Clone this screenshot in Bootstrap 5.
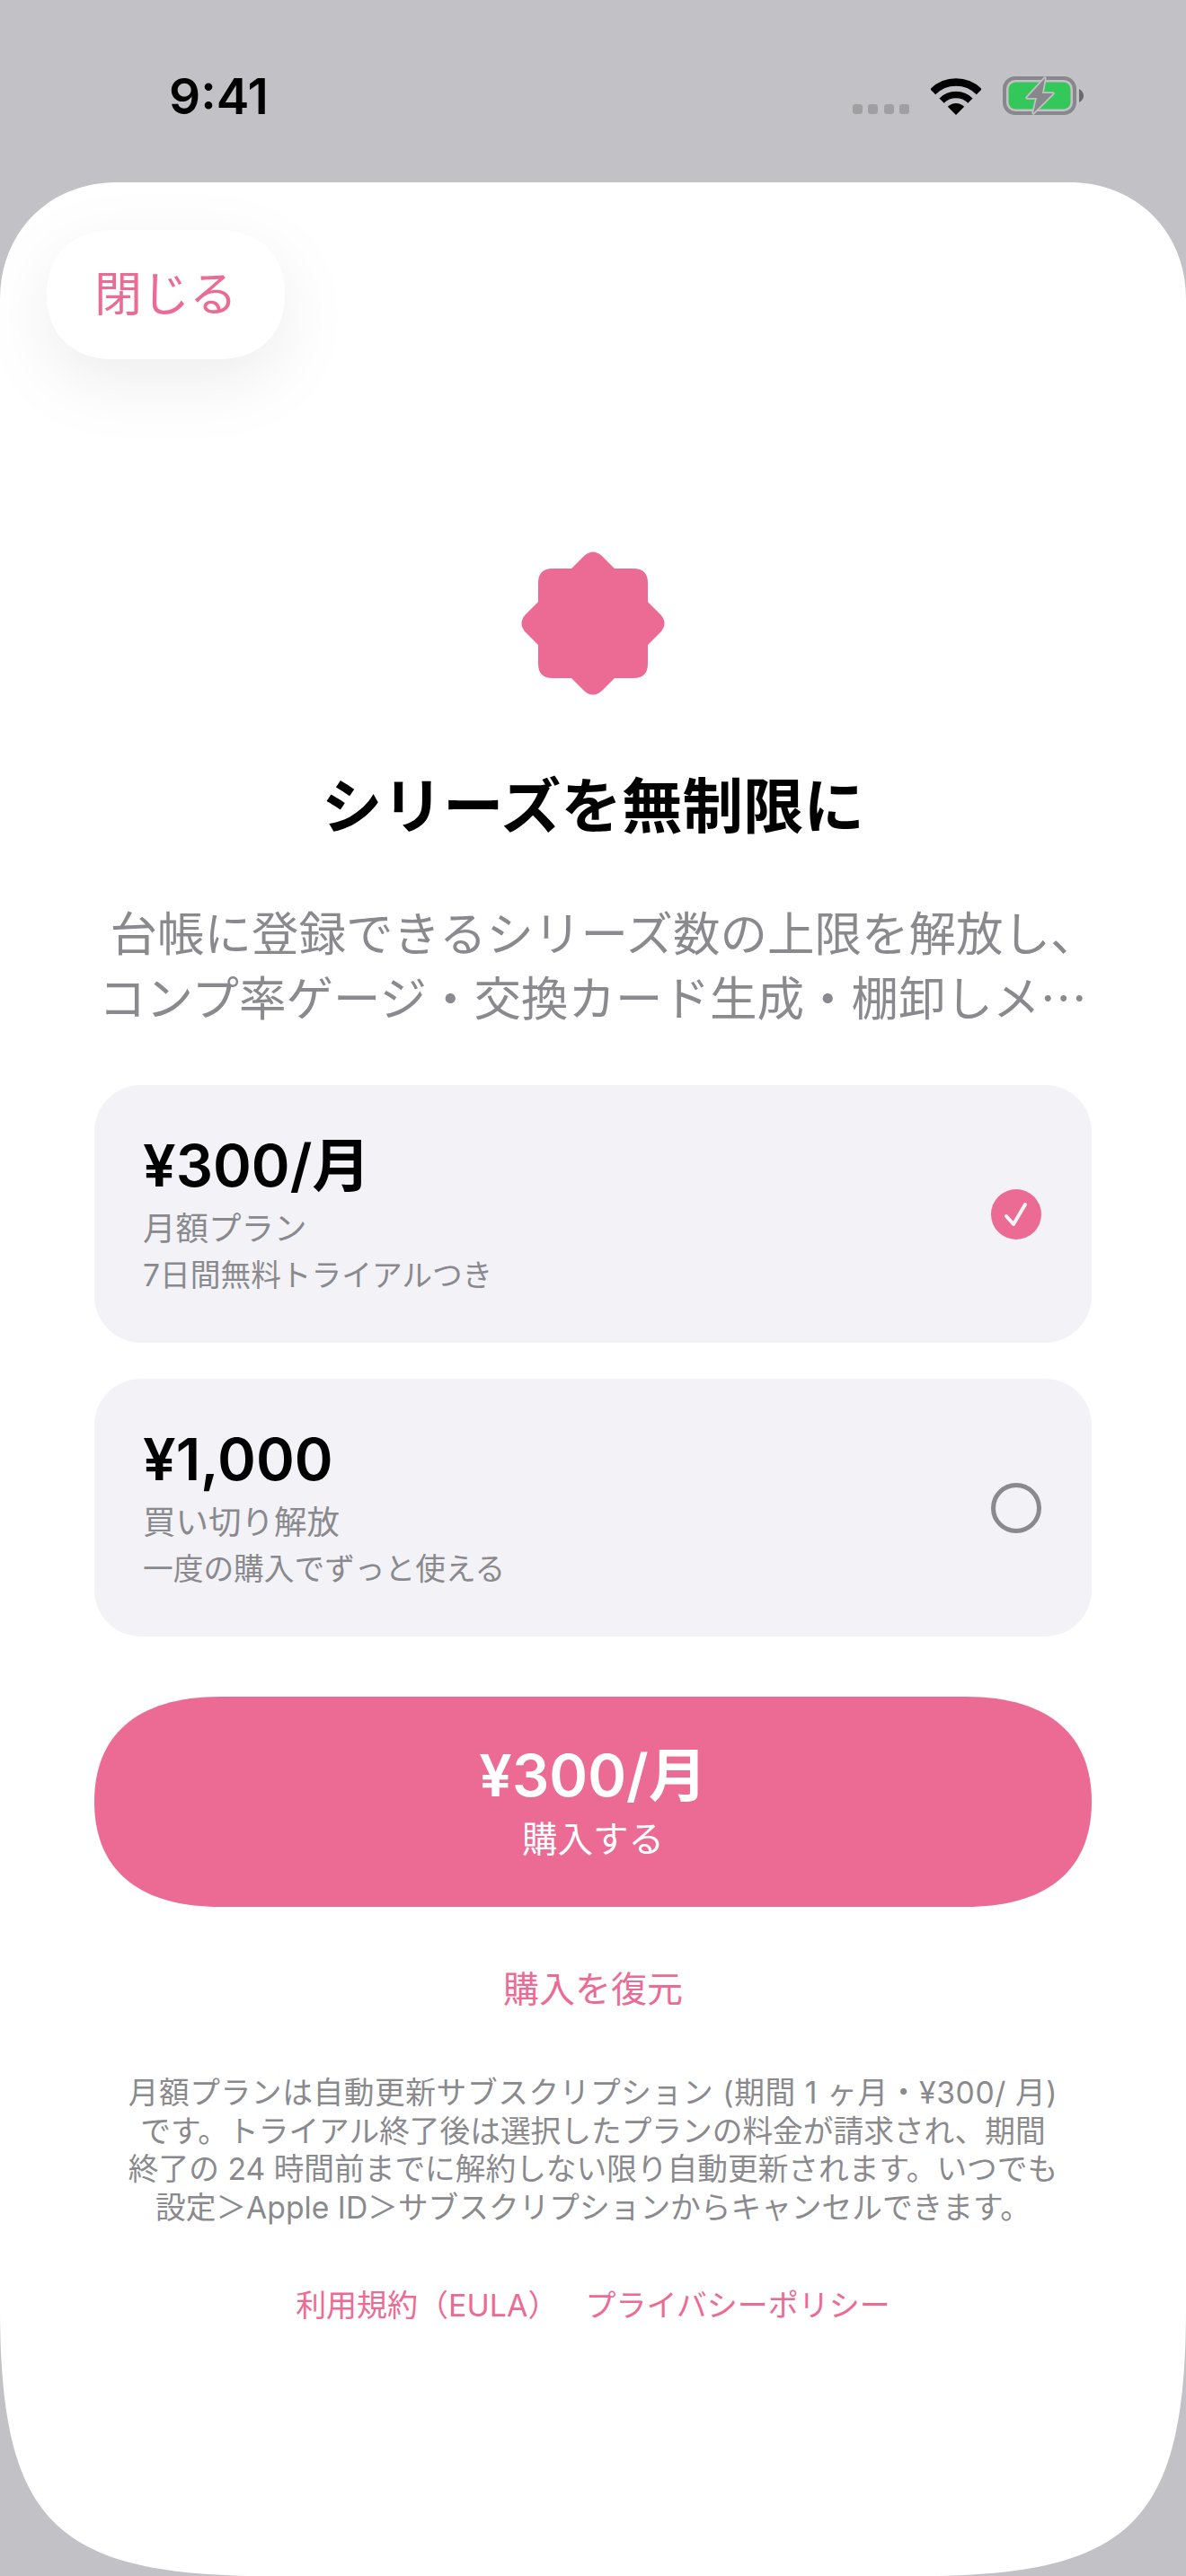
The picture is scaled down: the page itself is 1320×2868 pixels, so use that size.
<!DOCTYPE html>
<html lang="ja">
<head>
  <meta charset="UTF-8">
  <meta name="viewport" content="width=device-width, initial-scale=1.0">
  <title>シリーズを無制限に</title>
  <link href="https://cdn.jsdelivr.net/npm/bootstrap@5.3.0/dist/css/bootstrap.min.css" rel="stylesheet">
  <style>
    body { background: #c2c1c6; height: 2868px; overflow: hidden; font-family: Inter, "Noto Sans CJK JP", sans-serif; }
    .status-area { height: 203px; padding: 79px 114px 0 188px; }
    .clock { font-size: 55px; font-weight: 600; line-height: 56px; color: #000; }
    .signal-dots { gap: 6.500px; margin-right: 24px; margin-bottom: 1px; }
    .signal-dots span { width: 11px; height: 11px; border-radius: 3px; background: #a0a0a3; }
    .status-icons { padding-top: 6px; }
    /* sheet corners are continuous curves, not circles */
    .sheet { height: 2665px; background: #fff; padding: 53px 105px 0; overflow: hidden; clip-path: path("M0 130C0 55 55 0 130 0H1190C1265 0 1320 55 1320 130V2365C1320 2605 1260 2665 1020 2665H300C60 2665 0 2605 0 2365Z"); }
    .close-wrap { width: 265px; margin-left: -53px; filter: drop-shadow(0 24px 36px rgba(0,0,0,.07)); }
    .close-pill { width: 265px; height: 144px; background: #fff; color: #ec6b94; font-size: 53px; font-weight: 400; border: 0; padding: 2px 0 0; clip-path: path("M0 72C0 28 28 0 75 0H190C237 0 265 28 265 72C265 116 237 144 190 144H75C28 144 0 116 0 72Z"); }
    .badge-icon { margin-top: 214px; }
    .sheet-title { margin: 80px 0 0; font-size: 67.500px; line-height: 88px; font-weight: 700; color: #000; }
    .sheet-sub { margin: 59px -40px 0; font-size: 52.500px; line-height: 71.500px; color: #8a8a8e; white-space: nowrap; font-family: "Noto Sans CJK JP", sans-serif; }
    .sub-first { display: block; padding-left: 24px; }
    .plans { margin-top: 64px; gap: 40px; }
    .plan-box { height: 287px; background: #f2f2f7; border-radius: 52px; padding: 0 56px 0 54px; }
    .plan-price { font-size: 65px; line-height: 80px; font-weight: 600; color: #000; }
    .plan-name { font-size: 36.500px; line-height: 52px; color: #8a8a8e; margin-top: 4px; }
    .plan-note { font-size: 33.700px; line-height: 50px; color: #8a8a8e; margin-top: 1px; }
    .radio-off { width: 56px; height: 56px; border-radius: 50%; border: 5px solid #8a8a8e; }
    .radio-on { width: 56px; height: 56px; border-radius: 50%; background: #ec6b94; }
    .buy-btn { height: 234px; margin-top: 67px; width: 100%; background: #ec6b94; color: #fff; border: 0; border-radius: 0; clip-path: path("M0 117C0 45 45 0 140 0H970C1065 0 1110 45 1110 117C1110 189 1065 234 970 234H140C45 234 0 189 0 117Z"); }
    .buy-btn:hover { background: #ec6b94; color: #fff; }
    .buy-price { font-size: 65px; line-height: 84px; font-weight: 600; }
    .buy-label { font-size: 39.500px; line-height: 58px; }
    .restore-link { margin-top: 62px; font-size: 40px; line-height: 60px; color: #ec6b94; text-decoration: none; }
    .legal { margin: 64px -40px 0; font-size: 33.700px; line-height: 42.700px; color: #8a8a8e; white-space: nowrap; }
    .legal-first { display: block; letter-spacing: .6px; }
    .legal-links { margin-top: 63px; gap: 30px; font-size: 34px; line-height: 48px; }
    .legal-links a { color: #ec6b94; text-decoration: none; }
  </style>
</head>
<body>
<div class="status-area d-flex justify-content-between align-items-start">
  <div class="clock">9:41</div>
  <div class="status-icons d-flex align-items-end">
    <div class="signal-dots d-flex">
      <span></span><span></span><span></span><span></span>
    </div>
    <svg class="me-4" width="56" height="41" viewBox="0 0 56 41" aria-hidden="true">
      <path d="M2.2 15.2A36.5 36.5 0 0 1 53.8 15.2" fill="none" stroke="#000" stroke-width="8.5"/>
      <path d="M12.1 25.1A22.5 22.5 0 0 1 43.9 25.1" fill="none" stroke="#000" stroke-width="7.5"/>
      <path d="M28 41L18.8 31.8A13 13 0 0 1 37.2 31.8Z" fill="#000"/>
    </svg>
    <svg width="90" height="43" viewBox="0 0 90 43" aria-hidden="true">
      <rect x="2" y="2" width="78" height="39" rx="12" fill="none" stroke="#88888c" stroke-width="4"/>
      <rect x="6.500" y="6.500" width="69" height="30" rx="8" fill="#34c759"/>
      <path d="M85 14Q90 17 90 21.500Q90 26 85 29Z" fill="#6a6a6e"/>
      <path d="M47 2L27 24H38L34 41L56 19H44Z" fill="#88888c" stroke="#c2c1c6" stroke-width="3.500" stroke-linejoin="round" paint-order="stroke"/>
    </svg>
  </div>
</div>

<div class="sheet">
  <div class="close-wrap">
    <button type="button" class="close-pill d-block">閉じる</button>
  </div>

  <div class="text-center badge-icon">
    <svg width="160" height="160" viewBox="0 0 160 160" aria-hidden="true">
      <path fill="#ec6b94" d="M56 19L70 5Q80 -4 90 5L104 19H125Q141 19 141 35V56L155 70Q164 80 155 90L141 104V125Q141 141 125 141H104L90 155Q80 164 70 155L56 141H35Q19 141 19 125V104L5 90Q-4 80 5 70L19 56V35Q19 19 35 19Z"/>
    </svg>
  </div>

  <h1 class="sheet-title text-center">シリーズを無制限に</h1>
  <p class="sheet-sub text-center"><span class="sub-first">台帳に登録できるシリーズ数の上限を解放し、</span>コンプ率ゲージ・交換カード生成・棚卸しメ…</p>

  <div class="plans d-flex flex-column">
    <div class="plan-box d-flex justify-content-between align-items-center">
      <div>
        <div class="plan-price">¥300/月</div>
        <div class="plan-name">月額プラン</div>
        <div class="plan-note">7日間無料トライアルつき</div>
      </div>
      <div class="radio-on d-flex align-items-center justify-content-center">
        <svg width="28" height="30" viewBox="0 0 28 30" aria-hidden="true"><path d="M3 17L11 26L24 4" fill="none" stroke="#f5f5f8" stroke-width="4" stroke-linecap="round" stroke-linejoin="round"/></svg>
      </div>
    </div>
    <div class="plan-box d-flex justify-content-between align-items-center">
      <div>
        <div class="plan-price">¥1,000</div>
        <div class="plan-name">買い切り解放</div>
        <div class="plan-note">一度の購入でずっと使える</div>
      </div>
      <div class="radio-off"></div>
    </div>
  </div>

  <button type="button" class="btn buy-btn d-flex flex-column align-items-center justify-content-center">
    <span class="buy-price">¥300/月</span>
    <span class="buy-label">購入する</span>
  </button>

  <div class="text-center restore-link"><a href="#" class="restore-link">購入を復元</a></div>

  <p class="legal text-center"><span class="legal-first">月額プランは自動更新サブスクリプション (期間 1 ヶ月・¥300/ 月)</span>です。トライアル終了後は選択したプランの料金が請求され、期間<br>終了の 24 時間前までに解約しない限り自動更新されます。いつでも<br>設定＞Apple ID＞サブスクリプションからキャンセルできます。</p>

  <div class="legal-links d-flex justify-content-center">
    <a href="#">利用規約（EULA）</a>
    <a href="#">プライバシーポリシー</a>
  </div>
</div>

<script src="https://cdn.jsdelivr.net/npm/bootstrap@5.3.0/dist/js/bootstrap.bundle.min.js"></script>
</body>
</html>
